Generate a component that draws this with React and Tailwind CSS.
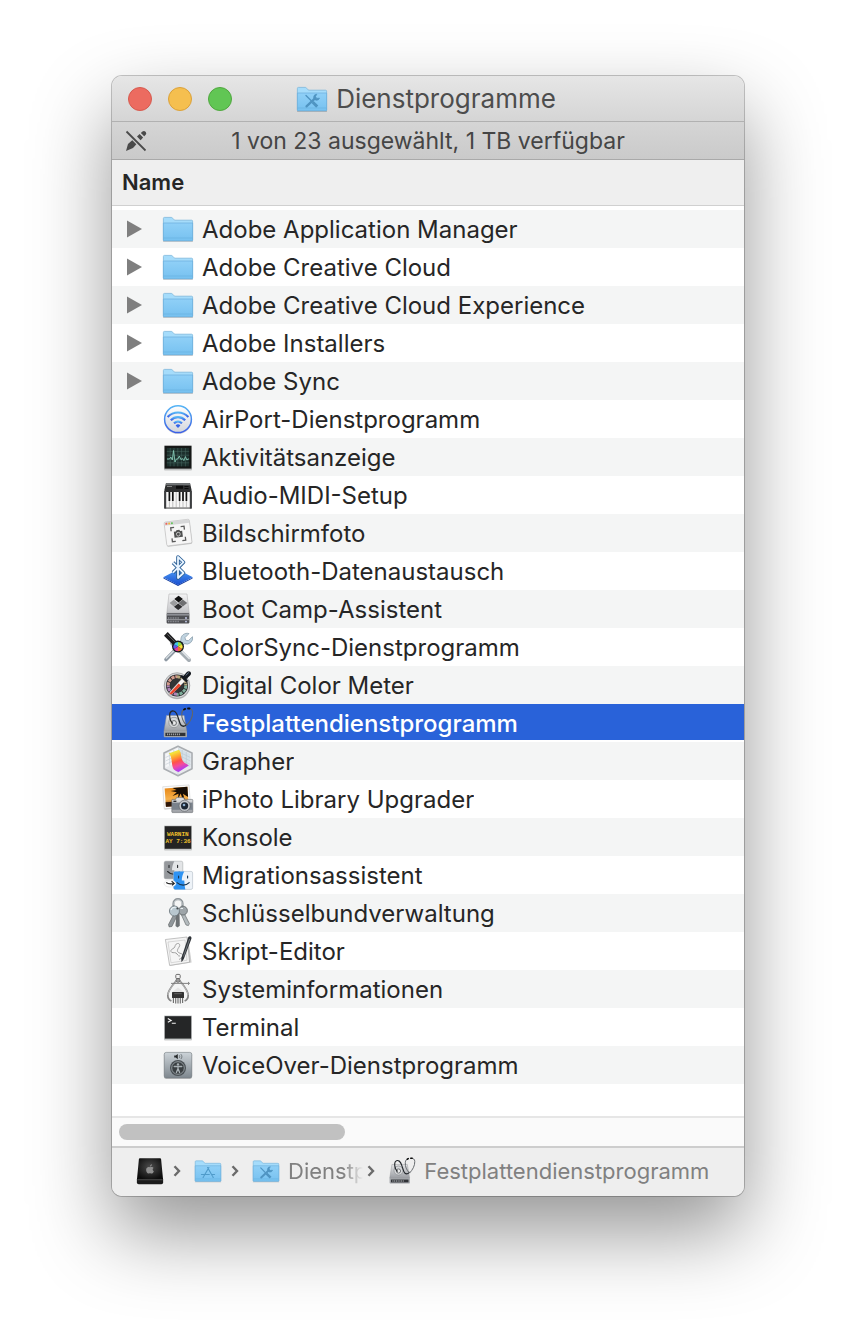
import { useState } from 'react';

// gradients used by more than one icon live in a single sprite
const Gradients = () => (
    <svg width="0" height="0" className="absolute" aria-hidden="true">
        <defs>
            <linearGradient id="folder" x1="0" y1="0" x2="0" y2="1">
                <stop offset="0" stopColor="#90d0f7" />
                <stop offset="1" stopColor="#76c1f0" />
            </linearGradient>
            <linearGradient id="silver" x1="0" y1="0" x2="0" y2="1">
                <stop offset="0" stopColor="#e4e5e7" />
                <stop offset="1" stopColor="#9b9ea3" />
            </linearGradient>
            <linearGradient id="plate" x1="0" y1="0" x2="0" y2="1">
                <stop offset="0" stopColor="#f4f4f5" />
                <stop offset="1" stopColor="#c2c3c6" />
            </linearGradient>
            <linearGradient id="airRing" x1="0" y1="0" x2="0" y2="1">
                <stop offset="0" stopColor="#55b4f5" />
                <stop offset="1" stopColor="#3a5fe8" />
            </linearGradient>
            <linearGradient id="airFace" x1="0" y1="0" x2="0" y2="1">
                <stop offset="0" stopColor="#ffffff" />
                <stop offset="1" stopColor="#d3d6dc" />
            </linearGradient>
            <linearGradient id="blue" x1="0" y1="0" x2="0" y2="1">
                <stop offset="0" stopColor="#4b9cf5" />
                <stop offset="1" stopColor="#1a4fd0" />
            </linearGradient>
            <linearGradient id="rainbow" x1="0" y1="0" x2="0.35" y2="1">
                <stop offset="0" stopColor="#a9e04a" />
                <stop offset="0.2" stopColor="#f6e23a" />
                <stop offset="0.4" stopColor="#ffa02e" />
                <stop offset="0.6" stopColor="#ff5348" />
                <stop offset="0.78" stopColor="#f54a9c" />
                <stop offset="1" stopColor="#b03cf0" />
            </linearGradient>
            <linearGradient id="sunset" x1="0" y1="0" x2="0" y2="1">
                <stop offset="0" stopColor="#e88a1a" />
                <stop offset="0.6" stopColor="#f6b04a" />
                <stop offset="1" stopColor="#7a3c10" />
            </linearGradient>
            <linearGradient id="voice" x1="0" y1="0" x2="0" y2="1">
                <stop offset="0" stopColor="#ccd3d8" />
                <stop offset="1" stopColor="#7e878e" />
            </linearGradient>
            <radialGradient id="drive" cx="0.5" cy="0.4" r="0.6">
                <stop offset="0" stopColor="#4c4c4c" />
                <stop offset="1" stopColor="#0c0c0c" />
            </radialGradient>
        </defs>
    </svg>
);

const Icon = ({ size = 'size-8', children }) => (
    <svg viewBox="0 0 32 32" className={`${size} shrink-0`} aria-hidden="true">
        {children}
    </svg>
);

const FolderShape = () => (
    <>
        <path d="M1 28.4h30" stroke="#000" strokeOpacity="0.2" />
        <path d="M1.4 27.5V5.4a1 1 0 0 1 1-1h7c1.6 0 1.8 2.8 3.6 2.8h16.6a1 1 0 0 1 1 1v19.3z" fill="#a5dcfb" stroke="#7cb8dc" strokeWidth="0.8" />
        <path d="M1.4 10h29.2v17a.8.8 0 0 1-.8.8H2.2a.8.8 0 0 1-.8-.8z" fill="url(#folder)" stroke="#6aaedb" strokeWidth="0.7" />
        <path d="M1.5 25h29" stroke="#60a9da" strokeWidth="0.5" />
    </>
);

const FolderIcon = () => <Icon><FolderShape /></Icon>;

const UtilitiesFolderIcon = ({ size }) => (
    <Icon size={size}>
        <FolderShape />
        <g fill="none" stroke="#4f94c2" strokeLinecap="round">
            <path d="M10 12.500l5 5" strokeWidth="1.4" />
            <path d="M16.600 19l4.600 4.600" strokeWidth="3" strokeLinecap="butt" />
            <path d="M10.500 23.400l8.500-8" strokeWidth="2.2" />
            <path d="M20.500 11.200a3 3 0 1 0 3 4l-2.700.2-1.200-1.500z" fill="#4f94c2" strokeWidth="0.8" />
        </g>
    </Icon>
);

const ApplicationsFolderIcon = ({ size }) => (
    <Icon size={size}>
        <FolderShape />
        <path d="M17 12l-5.500 9.500M15.500 12l5.400 9.500M8.500 20h9M21 20h2.500M11 22.400l-.6 1M21.400 22.400l.6 1" fill="none" stroke="#4f9bca" strokeWidth="1.3" strokeLinecap="round" />
    </Icon>
);

const AirPortIcon = () => (
    <Icon>
        <circle cx="16" cy="17" r="14" fill="#000" opacity="0.18" />
        <circle cx="16" cy="16.2" r="13.4" fill="url(#airFace)" stroke="url(#airRing)" strokeWidth="1.5" />
        <g fill="none" stroke="url(#airRing)" strokeWidth="2.2">
            <path d="M5.600 13.900a14.500 14.500 0 0 1 20.800 0" />
            <path d="M8.800 17.200a10 10 0 0 1 14.400 0" />
            <path d="M12 20.300a5.800 5.800 0 0 1 8 0" />
        </g>
        <path d="M13.600 22.400a3.400 3.400 0 0 1 4.800 0L16 25z" fill="#3565e8" />
    </Icon>
);

const ActivityIcon = () => (
    <Icon>
        <rect x="2" y="5" width="28" height="24.4" rx="1" fill="#000" opacity="0.2" />
        <rect x="2" y="4.4" width="28" height="24" rx="0.6" fill="#b9bcbc" />
        <rect x="2.6" y="4.8" width="26.8" height="22.8" fill="#151716" />
        <rect x="4.8" y="7" width="22.4" height="18.4" fill="#1c2f2c" />
        <path d="M4.800 10.400h22.400M4.800 14.200h22.400M4.800 18h22.400M4.800 21.800h22.400M8.200 7v18.400M12 7v18.400M15.800 7v18.400M19.600 7v18.400M23.400 7v18.400" stroke="#4a6d65" strokeWidth="0.5" />
        <path d="M5 18h2.500l1.400-2 1.400 3 1.200-9.500L13 21l1.400-3h1.400l1.500-3 1.600 3.600 1.600-1 1.400 2 1.500-4 1.500 3.500 1.200-1h1" fill="none" stroke="#86c9b6" strokeWidth="0.9" strokeLinejoin="round" />
    </Icon>
);

const MidiIcon = () => (
    <Icon>
        <path d="M4 4h24l1.600 7v18.400H2.400V11z" fill="#2d2e2f" />
        <path d="M4.200 4h23.600l.5 2.200H3.700z" fill="#707375" />
        <path d="M14 6.800h7v3h-7zM22.500 7h4v1h-4zM22.500 9h4v1h-4z" fill="#0b0b0b" />
        <path d="M5 7h5v.8H5z" fill="#9a9a9a" />
        <path d="M4 13h24v15.600H4z" fill="#f7f7f7" />
        <path d="M7.400 13v15.600M10.800 13v15.600M14.200 13v15.600M17.600 13v15.600M21 13v15.600M24.400 13v15.600" stroke="#888" strokeWidth="0.5" />
        <path d="M7.400 13v9M10.800 13v9M17.600 13v9M21 13v9M24.400 13v9" stroke="#111" strokeWidth="1.7" />
        <path d="M2.200 12h2v17.400h-2zM27.800 12h2v17.400h-2z" fill="#3c3e40" />
    </Icon>
);

const ScreenshotIcon = () => (
    <Icon>
        <g transform="rotate(-7 16 16)">
            <rect x="3.6" y="4.6" width="25.4" height="24" rx="1.6" fill="#000" opacity="0.18" />
            <rect x="3.4" y="3.6" width="25.4" height="24" rx="1.4" fill="#f6f6f6" stroke="#b9b9b9" strokeWidth="0.6" />
            <path d="M3.600 5a1.300 1.300 0 0 1 1.300-1.200h22.400A1.300 1.300 0 0 1 28.600 5v2.200h-25z" fill="#d6d7d8" />
            <circle cx="5.6" cy="5.5" r="1" fill="#f0635a" />
            <circle cx="8.4" cy="5.5" r="1" fill="#f3b53c" />
            <circle cx="11.2" cy="5.5" r="1" fill="#5ec455" />
            <path d="M9.400 13.400V10h3.400M19.400 10h3.400v3.400M22.800 20.600V24h-3.400M12.800 24H9.400v-3.400" fill="none" stroke="#5a5a5a" strokeWidth="1.3" />
            <path d="M12 14.200h2l.8-1.200h2.800l.8 1.200h2v6.200H12z" fill="#4f5050" />
            <circle cx="16.2" cy="17.2" r="1.9" fill="#4f5050" stroke="#e8e8e8" strokeWidth="0.7" />
        </g>
    </Icon>
);

const BluetoothIcon = () => (
    <Icon>
        <path d="M1.300 22.500L16 29.800l14.700-7.300-.2 1L16 31 1.500 23.500z" fill="#143c9c" />
        <path d="M16 14.500l14.800 7.700L16 30 1.200 22.200z" fill="url(#blue)" />
        <path d="M11 7.600l10.500 10.400L16 23V2l5.500 5.200L11 17.600" fill="none" stroke="#2b5f96" strokeWidth="3.6" strokeLinejoin="round" />
        <path d="M11 7.600l10.500 10.400L16 23V2l5.500 5.200L11 17.600" fill="none" stroke="#e8f4ff" strokeWidth="1.8" strokeLinejoin="round" />
    </Icon>
);

const BootCampIcon = () => (
    <Icon>
        <path d="M7 1h18l2.200 19H4.800z" fill="url(#plate)" stroke="#a8a8aa" strokeWidth="0.5" />
        <rect x="4.6" y="20" width="22.8" height="10.4" rx="0.8" fill="#4f5054" />
        <path d="M5 20.600h22v2H5z" fill="#8e9096" />
        <path d="M6 25h11M6 28.500h11" stroke="#8f9197" strokeWidth="1.6" strokeDasharray="1 0.7" />
        <path d="M4.800 26.700h22.400" stroke="#bfc0c6" strokeWidth="0.7" />
        <circle cx="24" cy="25" r="0.9" fill="#c9d0f0" />
        <circle cx="24" cy="28.6" r="0.9" fill="#c9d0f0" />
        <path d="M16.600 2.800l4.300 3.300-4.300 3.300-4.300-3.300z" fill="#111" />
        <path d="M20.800 6.600l4.400 3.400-4.400 3.400-4.400-3.400z" fill="#6f7072" />
        <path d="M11.800 6.800l4.200 3.300-4.200 3.300-4.200-3.300z" fill="#9b9c9e" />
        <path d="M16.200 10.400l4.200 3.300-4.200 3.300-4.200-3.300z" fill="#2b2b2d" />
    </Icon>
);

const ColorSyncIcon = () => (
    <Icon>
        <path d="M27 29L10 12" stroke="#a5adb3" strokeWidth="4" strokeLinecap="round" />
        <path d="M27.600 28L12 12.400" stroke="#e2e6e9" strokeWidth="1.4" />
        <path d="M4 28.500L20 12" stroke="#8f9aa4" strokeWidth="3.6" strokeLinecap="round" />
        <path d="M4 27.600L20 11.500" stroke="#dde3e8" strokeWidth="1.2" />
        <path d="M27 2.600l-4 4 .6 2.600 2.700.5 4.200-4a6 6 0 0 1-8 7l-3 2.500-3-3 2.400-3A6.200 6.200 0 0 1 27 2.600z" fill="#c0d3e0" stroke="#8096a5" strokeWidth="0.7" />
        <path d="M2 4.800l3.700-3.700 9.400 9.600-3.600 3.500z" fill="#1c1c1e" />
        <path d="M5.400 3.300l8 8" stroke="#77777a" strokeWidth="0.8" />
        <circle cx="16" cy="15.6" r="6" fill="#15191c" />
        <path d="M16 15.600V11a4.600 4.600 0 0 1 4 2.300z" fill="#8ee04a" />
        <path d="M16 15.600l4-2.300a4.600 4.600 0 0 1 0 4.600z" fill="#f4df3a" />
        <path d="M16 15.600l4 2.300a4.600 4.600 0 0 1-4 2.300z" fill="#f0742c" />
        <path d="M16 15.600v4.600a4.600 4.600 0 0 1-4-2.300z" fill="#e33b9a" />
        <path d="M16 15.600l-4 2.300a4.600 4.600 0 0 1 0-4.600z" fill="#5a5df0" />
        <path d="M16 15.600l-4-2.300a4.600 4.600 0 0 1 4-2.300z" fill="#3fc8e6" />
    </Icon>
);

const ColorMeterIcon = () => (
    <Icon>
        <circle cx="15" cy="17.2" r="13" fill="#000" opacity="0.2" />
        <circle cx="15" cy="16.5" r="12.8" fill="#d5d6d8" stroke="#8d8e90" strokeWidth="0.6" />
        <circle cx="15" cy="16.5" r="11" fill="#27282a" />
        <g fill="none" strokeWidth="3" strokeDasharray="3.2 0.8">
            <path d="M6.200 16.500a8.800 8.800 0 0 1 8.800-8.800" stroke="#d29a8c" />
            <path d="M15 7.700a8.800 8.800 0 0 1 8.800 8.800" stroke="#b9a77c" />
            <path d="M23.800 16.500a8.800 8.800 0 0 1-8.800 8.800" stroke="#7fae9b" />
            <path d="M15 25.300a8.800 8.800 0 0 1-8.800-8.800" stroke="#b184b8" />
        </g>
        <circle cx="15" cy="16.5" r="6.8" fill="#333436" />
        <path d="M6.800 26.500l1-3.400L20 9.600l2.800 2.600L10.200 25z" fill="#f7f4f2" stroke="#999" strokeWidth="0.4" />
        <path d="M7.500 25.600l.9-2.200 8.200-9 2.400 2.200-9 8.400z" fill="#e8432a" />
        <path d="M18.400 7.800l6 5.600 1.600-1.700-1.500-1.700 3.800-3.800c1.200-1.300.8-2.600 0-3.400s-2.300-.8-3.400.3l-3.600 4-1.500-1.200z" fill="#14181e" />
        <path d="M24 6.200l2.500-2.400" stroke="#6d7f95" strokeWidth="1" strokeLinecap="round" />
    </Icon>
);

const DiskUtilityIcon = ({ size }) => (
    <Icon size={size}>
        <path d="M4.500 8.500h17.600l2.600 15.500H2z" fill="url(#silver)" stroke="#8e9194" strokeWidth="0.5" />
        <rect x="1.8" y="23.8" width="23.2" height="6.4" rx="0.8" fill="#a1a4a8" />
        <rect x="3.4" y="25.8" width="20" height="3.2" fill="#303236" />
        <path d="M5 27.400h13" stroke="#9a9da2" strokeWidth="1.8" strokeDasharray="1.2 0.8" />
        <circle cx="12" cy="15.5" r="5.2" fill="#d5d7d9" stroke="#8c8f92" strokeWidth="0.8" />
        <circle cx="12" cy="16" r="2.4" fill="#eceded" stroke="#64676a" strokeWidth="1" />
        <path d="M11 16.500C7.400 14 6 5 10.400 4c4.600-.6 5.400 6.400 7.600 12.400 1.400 3.800 5.200 3.600 6.600.6" fill="none" stroke="#24282c" strokeWidth="1.3" />
        <path d="M24.600 18.400c3.400-3.600 6.200-8.400 6-13.200 0-2.600-1.700-3.800-4-3.700M24.600 18.400c-3.600-3.600-5.100-7.600-4.800-12 .2-2.600 1.200-3.800 3-4.300" fill="none" stroke="#62666a" strokeWidth="1.1" />
        <path d="M26 1.500h1.600M22 2.500l1.200-.6" stroke="#0e0e0e" strokeWidth="1.8" strokeLinecap="round" />
    </Icon>
);

const GrapherIcon = () => (
    <Icon>
        <path d="M16 1.200l14 6.800v15.800l-14 7-14-7V8z" fill="#e8eaed" stroke="#a9adb1" strokeWidth="1.6" strokeLinejoin="round" />
        <path d="M16 2.800L28.400 9v13.600L16 17z" fill="#d4e0e8" />
        <path d="M16 2.800L3.600 9v13.600L16 17z" fill="#f5f6f8" />
        <path d="M3.600 12.500L16 6.500l12.400 6M3.600 16L16 10l12.400 6M3.600 19.500L16 13.500l12.400 6M7.700 7v13.700M11.800 5v13.700M20.200 5v13.700M24.300 7v13.700M16 17v12.500" fill="none" stroke="#b6c3cb" strokeWidth="0.5" />
        <path d="M6.600 8.500l10.400-3.700c2.400 2 1.800 8 3.600 11 1.500 2.400 4.200 3 6.200 4.600L16.600 27c-4-1.200-5.600-2.600-6.300-6.400-.8-4.600-.5-9.800-3.700-12.100z" fill="url(#rainbow)" />
    </Icon>
);

const IPhotoIcon = () => (
    <Icon>
        <g transform="rotate(-4 15 13)">
            <rect x="1.6" y="4" width="25.6" height="21.6" fill="#000" opacity="0.25" />
            <rect x="1.4" y="2.8" width="26.4" height="22" fill="#fbfbfb" stroke="#c8c8c8" strokeWidth="0.5" />
            <rect x="3.2" y="4.6" width="22.8" height="18.4" fill="url(#sunset)" />
            <path d="M26 4.600h-15l4 2.500-6 .5 6 1.600-4.500 3.600 6.200-2-1 5.400 3.200-5.400 1.800 7.400h2l-1.600-7 4.900 3.600z" fill="#160d05" />
            <path d="M3.200 18.500h22.800V23H3.200z" fill="#2c1608" />
        </g>
        <path d="M14.500 14.600h7l1 1.800H30a.8.8 0 0 1 .8.800v11.600a.8.8 0 0 1-.8.800H10.600a.8.8 0 0 1-.8-.8V17.200a.8.8 0 0 1 .8-.8h3z" fill="url(#silver)" stroke="#55585c" strokeWidth="0.5" />
        <rect x="10" y="19.6" width="20.6" height="7.2" fill="#7a828c" />
        <circle cx="22.6" cy="22.8" r="5.6" fill="#c5c8cc" stroke="#55595d" strokeWidth="0.6" />
        <circle cx="22.6" cy="22.8" r="3.6" fill="#1d2733" />
        <circle cx="22" cy="22" r="1.3" fill="#8fb0d0" />
        <path d="M11.400 17.600h3v1.400h-3z" fill="#2b2d30" />
    </Icon>
);

const ConsoleIcon = () => (
    <Icon>
        <rect x="2" y="5.6" width="28" height="24" rx="1" fill="#000" opacity="0.2" />
        <rect x="2" y="4.6" width="28" height="24" rx="0.5" fill="#c9cccc" />
        <rect x="2.7" y="5.2" width="26.6" height="22.6" fill="#232323" />
        <g fontFamily="Liberation Mono" fontWeight="700" fontSize="6" fill="#f0c02c">
            <text x="5" y="14.6">WARNIN</text>
            <text x="3.4" y="22.2">AY 7:36</text>
        </g>
    </Icon>
);

const MigrationIcon = () => (
    <Icon>
        <rect x="2.2" y="2.2" width="18.6" height="17.6" rx="1.6" fill="#e3e5e7" stroke="#9da0a3" strokeWidth="0.5" />
        <path d="M3.800 2.200h8.500c-1.500 3-2.300 6-2.300 9h2.400c0 3 .3 6 1 8.600H3.800a1.600 1.600 0 0 1-1.600-1.600V3.800a1.600 1.600 0 0 1 1.600-1.600z" fill="#96999d" />
        <path d="M7 6.400v2M15.600 6.400v2M5.600 12.500c3.600 3.600 8.600 3.600 12 0" fill="none" stroke="#26292c" strokeWidth="1.1" strokeLinecap="round" />
        <rect x="11.6" y="12.4" width="19" height="18" rx="1.6" fill="#eef3f8" stroke="#a5b1bb" strokeWidth="0.5" />
        <path d="M13.200 12.400h9c-1.600 3-2.400 6-2.400 9.200h2.500c0 3 .4 6 1 8.800H13.200a1.600 1.600 0 0 1-1.600-1.600V14a1.600 1.600 0 0 1 1.600-1.600z" fill="#2e93f3" />
        <path d="M16.600 17v2M25.600 17v2M15 23.600c3.600 3.400 8.800 3.400 12.200 0" fill="none" stroke="#16344f" strokeWidth="1.1" strokeLinecap="round" />
        <ellipse cx="8" cy="24.5" rx="6" ry="3.6" fill="#fff" stroke="#d0d0d0" strokeWidth="0.4" />
        <path d="M4.200 23.500c2 1.600 4.400 1.600 7.200 1M9.600 22.200l2.600 2.200-2.200 2" fill="none" stroke="#222" strokeWidth="1.2" />
    </Icon>
);

const KeychainIcon = () => (
    <Icon>
        <path d="M11.500 12V6.600c0-6 9-6 9 0V12" fill="none" stroke="#8d9498" strokeWidth="2.2" />
        <path d="M12 8V6.600c0-5 8-5 8 0V8" fill="none" stroke="#dfe4e7" strokeWidth="0.7" />
        <path d="M14.500 15l-1 14 2 1.600 2.300-1.800L17.500 15z" fill="#6d7275" />
        <path d="M12 17L6.500 27.500l.6 2.400 2.800-.4L15 19z" fill="#90979b" stroke="#55595b" strokeWidth="0.6" />
        <path d="M19 17l5 11 2.400.6 1-2L22 16z" fill="#b3babd" stroke="#5b6062" strokeWidth="0.6" />
        <circle cx="21" cy="13.6" r="4.4" fill="#9ea5a9" stroke="#5e6467" strokeWidth="0.8" />
        <circle cx="12.4" cy="14" r="5" fill="#b8c7cf" stroke="#69757b" strokeWidth="0.8" />
        <path d="M9 13c.7-2 2.600-3 4.700-2.600" fill="none" stroke="#edf3f6" strokeWidth="1.1" />
        <circle cx="15.4" cy="11.5" r="1" fill="#454a4c" />
        <path d="M18.500 11.500h2.500" stroke="#eaf0f2" strokeWidth="1" />
    </Icon>
);

const ScriptEditorIcon = () => (
    <Icon>
        <path d="M4 5.200l22-2.600 3.600 25L8 31z" fill="#000" opacity="0.2" />
        <path d="M3.400 4.500L25 2l2.600 25.200-20 3.200z" fill="#f5f5f5" stroke="#a9a9a9" strokeWidth="0.7" />
        <path d="M6 7l17-2 2 20.200-16 2.600z" fill="none" stroke="#c2c2c2" strokeWidth="0.6" />
        <path d="M15.500 8.500c-3 .6-2 3.500-3.500 4.500s-3.600 1.600-3 3.500 3.300.6 5 1.500 1.600 3.500 4 3M15.500 8.500c2-.4 3 1.500 1.600 3.500s-2.600 4-.6 5.500 4 .6 4.200 2.500-1.700 3.500-3.700 4.500" fill="none" stroke="#8e8e8e" strokeWidth="0.8" />
        <path d="M28 1.200c1.400.3 1.700 1.400 1.400 2.600L21.800 24l-2.300 3.200-.3-3.800L26 3c.4-1.200 1-2 2-1.800z" fill="#2f3338" />
        <path d="M27.600 4L21.500 21.500" stroke="#888e94" strokeWidth="0.7" />
    </Icon>
);

const SystemInfoIcon = () => (
    <Icon>
        <rect x="13.8" y="1.4" width="4.4" height="4.2" rx="1" fill="#f3f3f3" stroke="#6d6d6d" strokeWidth="1" />
        <path d="M14.500 7.500C11 12 5.800 17 5.800 22.500c0 2.600 1.200 4.400 3.600 5.500M17.500 7.500C21 12 26.200 17 26.200 22.500c0 2.600-1.200 4.400-3.600 5.500" fill="none" stroke="#858585" strokeWidth="1.7" />
        <path d="M14.400 8C11 12.400 6.400 17 6 22M17.600 8C21 12.400 25.600 17 26 22" fill="none" stroke="#efefef" strokeWidth="0.5" />
        <circle cx="16" cy="7.4" r="2" fill="#9b9b9b" stroke="#555" strokeWidth="0.6" />
        <path d="M9 10.400h18M26 9l1.600 1.400-1.600 1.400" fill="none" stroke="#777" strokeWidth="0.9" />
        <path d="M9.600 19.600L16 14.500l6.400 5.100z" fill="#e5e5e5" />
        <rect x="10" y="19" width="12" height="6" rx="0.6" fill="#333" />
        <path d="M12.300 20.700h7.400" stroke="#777" strokeWidth="0.7" />
        <path d="M11.400 25v5M13.700 25v5.600M16 25v5.600M18.300 25v5.600M20.600 25v5" stroke="#6b6b6b" strokeWidth="1.1" />
    </Icon>
);

const TerminalIcon = () => (
    <Icon>
        <rect x="2" y="5.6" width="28" height="24" rx="1" fill="#000" opacity="0.2" />
        <rect x="2" y="4.4" width="28" height="24.2" rx="0.6" fill="#c6c9ca" />
        <rect x="2.8" y="5.2" width="26.4" height="22.4" fill="#252627" />
        <path d="M5.800 7.500l3.400 1.900-3.400 1.900M9.800 12.200h4" fill="none" stroke="#f4f4f4" strokeWidth="1.1" />
    </Icon>
);

const VoiceOverIcon = () => (
    <Icon>
        <rect x="2" y="4" width="28" height="26" rx="2.2" fill="#000" opacity="0.2" />
        <rect x="2.2" y="3.4" width="27.6" height="25.6" rx="2" fill="url(#voice)" stroke="#727a80" strokeWidth="0.6" />
        <path d="M12.200 6.600h1.600l2-1.600v5.200l-2-1.600h-1.600z" fill="#26292b" />
        <path d="M17.200 6.200c.7.800.7 2 0 2.800M18.900 5.200c1.300 1.400 1.300 3.400 0 4.800" fill="none" stroke="#5c6367" strokeWidth="0.8" />
        <circle cx="16" cy="19" r="8" fill="#4a5054" />
        <circle cx="16" cy="19" r="6.3" fill="#3a3f42" stroke="#98a0a5" strokeWidth="0.9" />
        <circle cx="16" cy="15.4" r="1.2" fill="#a9b1b5" />
        <path d="M12.200 17.500h7.600M16 17.300v3M16 19.600l-1.600 3.800M16 19.600l1.600 3.800" stroke="#a9b1b5" strokeWidth="1.3" strokeLinecap="round" />
    </Icon>
);

const DriveIcon = ({ size }) => (
    <Icon size={size}>
        <path d="M4.500 1.500h23a1.200 1.200 0 0 1 1.200 1l2.300 24H1l2.300-24a1.200 1.200 0 0 1 1.200-1z" fill="url(#drive)" />
        <path d="M1 25.500h30v3.500a2 2 0 0 1-2 2H3a2 2 0 0 1-2-2z" fill="#1b1b1b" />
        <path d="M1.600 26h28.800" stroke="#6c6c6c" strokeWidth="0.7" />
        <path d="M16 11.800c1-.6 3.400-.8 4 .8-1.500 1-1.200 3 .4 3.700-.7 2-2 3-3.200 2.500-.9-.4-1.500-.4-2.400 0-1.700.6-3.400-2.400-3.200-4.600.2-2.400 2.600-3.400 4.400-2.400zM16 11c0-1.500.9-2.400 2.200-2.600 0 1.500-.8 2.500-2.200 2.600z" fill="#909090" />
    </Icon>
);

const NoEditIcon = () => (
    <svg viewBox="0 0 24 24" className="size-6 shrink-0" aria-hidden="true">
        <path d="M2 22l2-7 5.300-4.700 4 4L9 19z" fill="#4a4a4a" />
        <path d="M13 7.600l2.600-2.500 3.500 3.500-2.500 2.600z" fill="#4a4a4a" />
        <path d="M16.800 4l1.700-1.500c1-.9 2.200-.6 3 .2s1.100 2 .2 3L20.200 7.300z" fill="#4a4a4a" />
        <path d="M2.500 2.500l19 19" stroke="#d0d0d0" strokeWidth="4" />
        <path d="M2.500 2.500l19 19" stroke="#4a4a4a" strokeWidth="1.8" />
    </svg>
);

const Chevron = () => (
    <svg viewBox="0 0 8 12" className="h-3 w-2 shrink-0" aria-hidden="true">
        <path d="M1.500 1.200L6 6l-4.500 4.800" fill="none" stroke="#6b6b6b" strokeWidth="2.4" />
    </svg>
);

const items = [
    { name: 'Adobe Application Manager', icon: FolderIcon, folder: true },
    { name: 'Adobe Creative Cloud', icon: FolderIcon, folder: true },
    { name: 'Adobe Creative Cloud Experience', icon: FolderIcon, folder: true },
    { name: 'Adobe Installers', icon: FolderIcon, folder: true },
    { name: 'Adobe Sync', icon: FolderIcon, folder: true },
    { name: 'AirPort-Dienstprogramm', icon: AirPortIcon },
    { name: 'Aktivitätsanzeige', icon: ActivityIcon },
    { name: 'Audio-MIDI-Setup', icon: MidiIcon },
    { name: 'Bildschirmfoto', icon: ScreenshotIcon },
    { name: 'Bluetooth-Datenaustausch', icon: BluetoothIcon },
    { name: 'Boot Camp-Assistent', icon: BootCampIcon },
    { name: 'ColorSync-Dienstprogramm', icon: ColorSyncIcon },
    { name: 'Digital Color Meter', icon: ColorMeterIcon },
    { name: 'Festplattendienstprogramm', icon: DiskUtilityIcon },
    { name: 'Grapher', icon: GrapherIcon },
    { name: 'iPhoto Library Upgrader', icon: IPhotoIcon },
    { name: 'Konsole', icon: ConsoleIcon },
    { name: 'Migrationsassistent', icon: MigrationIcon },
    { name: 'Schlüsselbundverwaltung', icon: KeychainIcon },
    { name: 'Skript-Editor', icon: ScriptEditorIcon },
    { name: 'Systeminformationen', icon: SystemInfoIcon },
    { name: 'Terminal', icon: TerminalIcon },
    { name: 'VoiceOver-Dienstprogramm', icon: VoiceOverIcon },
];

const FileRow = ({ item, selected, onSelect }) => {
    const ItemIcon = item.icon;

    return (
        <tr
            onClick={onSelect}
            aria-selected={selected}
            className={selected ? 'bg-[#2962d9] font-medium text-white' : 'text-[#262626] odd:bg-[#f4f5f5]'}
        >
            <td className={selected ? 'h-[38px] p-0 shadow-[inset_0_-2px_0_#fff]' : 'h-[38px] p-0'}>
                <div className="flex items-center pl-3">
                    <div className="flex w-[38px] shrink-0">
                        {item.folder && (
                            <button type="button" aria-label={`${item.name} einblenden`} className="flex size-5 items-center justify-center">
                                <svg viewBox="0 0 16 18" className="h-[18px] w-4" aria-hidden="true">
                                    <path d="M1 0.500L16 9 1 17.500z" fill="#7f7f7f" />
                                </svg>
                            </button>
                        )}
                    </div>
                    <ItemIcon />
                    <span className="ml-2 truncate pt-0.5 text-[24px] leading-8">{item.name}</span>
                </div>
            </td>
        </tr>
    );
};

const App = () => {
    const [selected, setSelected] = useState('Festplattendienstprogramm');

    return (
        <div className="min-h-screen bg-white px-28 pt-[76px] pb-[148px] font-['Inter',sans-serif]">
            <Gradients />
            <main className="overflow-hidden rounded-[10px] bg-white shadow-[0_0_0_1px_rgba(0,0,0,0.22),0_36px_80px_rgba(0,0,0,0.42)]">
                <header className="grid h-[46px] grid-cols-[1fr_auto_1fr] items-center border-b border-[#b1b1b1] bg-gradient-to-b from-[#e6e6e6] to-[#d5d5d5] px-4">
                    <div className="flex gap-4">
                        <button type="button" aria-label="Schließen" className="size-6 rounded-full border border-[#d65a4f] bg-[#ec6b60]"></button>
                        <button type="button" aria-label="Minimieren" className="size-6 rounded-full border border-[#dba13a] bg-[#f5bf4f]"></button>
                        <button type="button" aria-label="Vollbild" className="size-6 rounded-full border border-[#50a73f] bg-[#61c654]"></button>
                    </div>
                    <div className="flex items-center gap-2 pr-1">
                        <UtilitiesFolderIcon />
                        <h1 className="text-[26px] leading-8 text-[#4d4d4d]">Dienstprogramme</h1>
                    </div>
                </header>

                <div className="grid h-[38px] grid-cols-[24px_1fr_24px] items-center border-b border-[#a9a9a9] bg-gradient-to-b from-[#d5d5d5] to-[#cacaca] px-3">
                    <NoEditIcon />
                    <p className="text-center text-[23px] leading-8 text-[#454545]">1 von 23 ausgewählt, 1 TB verfügbar</p>
                </div>

                <table className="w-full table-fixed border-separate border-spacing-0">
                    <thead>
                        <tr>
                            <th className="h-[46px] border-b border-[#d0d0d0] bg-[#efefef] p-0 pb-0.5 pl-[10px] text-left text-[22px] leading-8 font-semibold text-[#262626]">Name</th>
                        </tr>
                    </thead>
                    <tbody>
                        <tr aria-hidden="true">
                            <td className="h-1 p-0"></td>
                        </tr>
                    </tbody>
                    <tbody>
                        {items.map((item) => (
                            <FileRow
                                key={item.name}
                                item={item}
                                selected={item.name === selected}
                                onSelect={() => setSelected(item.name)}
                            />
                        ))}
                    </tbody>
                </table>

                <div className="mt-8 border-t-2 border-[#e6e6e6] bg-[#fafafa] px-[7px] py-[6px]">
                    <div className="h-4 w-[226px] rounded-full bg-[#c1c1c1]"></div>
                </div>

                <nav aria-label="Pfad" className="flex h-[50px] items-center border-t-2 border-[#cdcdcd] bg-[#eeeeee] pb-0.5 pl-6 text-[22px] leading-8 text-[#808080]">
                    <a href="#macintosh-hd" aria-label="Macintosh HD" className="mr-[9px]"><DriveIcon size="size-7" /></a>
                    <Chevron />
                    <a href="#programme" aria-label="Programme" className="mr-[9px] ml-[13px]"><ApplicationsFolderIcon size="size-7" /></a>
                    <Chevron />
                    <a href="#dienstprogramme" aria-label="Dienstprogramme" className="ml-[13px] flex items-center gap-2">
                        <UtilitiesFolderIcon size="size-7" />
                        <span className="mask-r-from-70% mask-r-to-95%">Dienstp</span>
                    </a>
                    <Chevron />
                    <a href="#festplattendienstprogramm" className="ml-[13px] flex items-center gap-2">
                        <DiskUtilityIcon size="size-7" />
                        <span>Festplattendienstprogramm</span>
                    </a>
                </nav>
            </main>
        </div>
    );
};

export default App;
